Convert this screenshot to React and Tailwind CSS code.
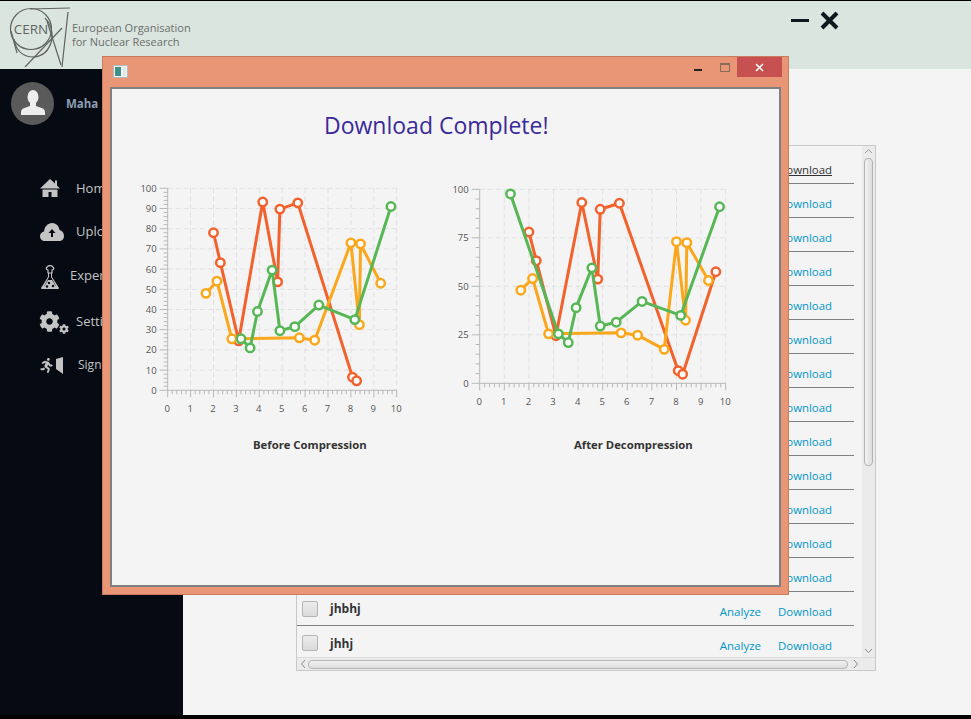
import React from "react";
import { FaCog, FaRunning } from "react-icons/fa";

const red = [[2, 78], [2.3, 63.2], [3.1, 24.5], [4.15, 93.2], [4.8, 53.7], [4.9, 89.7], [5.68, 92.8], [8.07, 6.5], [8.25, 4.7]];
const orange = [[1.67, 48], [2.15, 54], [2.8, 25.5], [5.75, 26], [6.42, 24.8], [8, 73], [8.37, 32.5], [8.42, 72.5], [9.3, 53]];
const green = [[3.2, 25.5], [3.6, 21], [3.92, 39], [4.56, 59.5], [4.9, 29.5], [5.55, 31.5], [6.6, 42.2], [8.17, 35], [9.75, 91]];

const beforeSeries = [
  { color: "#f3622d", points: red },
  { color: "#fba71b", points: orange },
  { color: "#57b757", points: green },
];

const afterSeries = [
  { color: "#f3622d", points: [...red, [9.6, 57.5]] },
  { color: "#fba71b", points: [...orange.slice(0, 5), [7.5, 17.5], ...orange.slice(5)] },
  { color: "#57b757", points: [[1.25, 97.6], ...green] },
];

const rows = Array.from({ length: 15 }, (_, i) => (i === 14 ? "jhhj" : "jhbhj"));

const range = (n) => Array.from({ length: n }, (_, i) => i);

// axis and plot, same as the JavaFX line chart on the source window
const Chart = ({ x0, x1, y0, y1, yStep, yMinor, series, width }) => {
  const px = (v) => x0 + ((x1 - x0) * v) / 10;
  const py = (v) => y0 - ((y0 - y1) * v) / 100;
  const yMajors = range(100 / yStep + 1).map((i) => i * yStep);
  const yMinors = range(100 / yMinor + 1).map((i) => i * yMinor);

  return (
    <svg width={width} height={240} className="block shrink-0" style={{ fontFamily: "'Open Sans', sans-serif" }}>
      {yMajors.filter((v) => v > 0).map((v) => (
        <line key={v} x1={x0} x2={x1} y1={py(v)} y2={py(v)} stroke="#e0e0e0" strokeDasharray="5 3" />
      ))}
      {range(10).map((i) => (
        <line key={i} x1={px(i + 1)} x2={px(i + 1)} y1={y1} y2={y0} stroke="#e0e0e0" strokeDasharray="5 3" />
      ))}
      <line x1={x0} x2={x0} y1={y1} y2={y0} stroke="#b8b8b8" />
      <line x1={x0} x2={x1} y1={y0} y2={y0} stroke="#b8b8b8" />
      {yMinors.map((v) => (
        <line key={v} x1={x0 - (v % yStep === 0 ? 8 : 4)} x2={x0} y1={py(v)} y2={py(v)} stroke="#b8b8b8" />
      ))}
      {range(51).map((i) => (
        <line key={i} x1={px(i / 5)} x2={px(i / 5)} y1={y0} y2={y0 + (i % 5 === 0 ? 7 : 4)} stroke="#b8b8b8" />
      ))}
      {yMajors.map((v) => (
        <text key={v} x={x0 - 11} y={py(v) + 3.5} textAnchor="end" fontSize="9.5" fill="#555555">
          {v}
        </text>
      ))}
      {range(11).map((i) => (
        <text key={i} x={px(i) - 0.5} y={y0 + 21.5} textAnchor="middle" fontSize="9.5" fill="#555555">
          {i}
        </text>
      ))}
      {series.map((s) => (
        <g key={s.color}>
          <polyline
            points={s.points.map(([x, y]) => `${px(x)},${py(y)}`).join(" ")}
            fill="none"
            stroke={s.color}
            strokeWidth="3"
            strokeLinejoin="round"
          />
          {s.points.map(([x, y], i) => (
            <circle key={i} cx={px(x)} cy={py(y)} r="4.2" fill="#ffffff" stroke={s.color} strokeWidth="2.5" />
          ))}
        </g>
      ))}
    </svg>
  );
};

const CernLogo = () => (
  <svg width="66" height="66" viewBox="0 0 66 66" fill="none" stroke="#5f6361" strokeWidth="1.2" className="shrink-0">
    <circle cx="26" cy="28" r="20.5" />
    <path d="M9 38 Q12 55 27 56 Q43 56 47 38 Q48 25 40 17" />
    <path d="M25 8 L65 7" />
    <path d="M63 11 L57 66" />
    <path d="M20 66 L57 27" />
    <path d="M42 20 Q49 42 56 64" />
    <path d="M6 30 L12 52" />
    <text x="26" y="33" textAnchor="middle" fontSize="13.5" fill="#5f6361" stroke="none" style={{ fontFamily: "'Open Sans', sans-serif" }}>
      CERN
    </text>
  </svg>
);

const HomeIcon = () => (
  <svg width="20" height="18" viewBox="0 0 20 18" fill="#c4c4c4">
    <path d="M10 0 L15 4.5 V1.500 H17 V6.500 L20 9.500 H0 Z" />
    <path d="M2.5 10.500 H17.5 V18 H11.500 V13 H8.500 V18 H2.5 Z" />
  </svg>
);

const CloudIcon = () => (
  <svg width="24" height="18" viewBox="0 0 24 18">
    <path
      d="M5 18 C2 18 0 16 0 13 C0 10.500 2 9 4 8.500 C4.500 3.500 8 0 12 0 C16 0 19 3 19.500 7 C22 7.500 24 10 24 13 C24 16 22 18 19 18 Z"
      fill="#c4c4c4"
    />
    <path d="M12 6 L15.500 10 H13 V14 H11 V10 H8.500 Z" fill="#060b13" />
  </svg>
);

const FlaskIcon = () => (
  <svg width="18" height="24" viewBox="0 0 18 24" fill="#c4c4c4">
    <path d="M6 2 Q9 -1 12 2 Q14 4 11 5 V8 H7 V5 Q4 4 6 2 Z" fill="none" stroke="#c4c4c4" strokeWidth="1.200" />
    <path d="M7 8 H8 V12 L3 21 H15 L10 12 V8 H11 V12 L18 23 Q18 24 17 24 H1 Q0 24 0 23 L7 12 Z" />
    <path d="M7 15 H11 L16 23 H2 Z" />
    <circle cx="8" cy="18" r="1.200" fill="#060b13" />
    <circle cx="12" cy="21" r="1.200" fill="#060b13" />
    <circle cx="6" cy="21.500" r="1.200" fill="#060b13" />
  </svg>
);

const GearsIcon = () => (
  <div className="flex items-end text-[#c4c4c4]">
    <FaCog size={21} />
    <FaCog size={10} className="-ml-px -mb-[2px]" />
  </div>
);

const ExitIcon = () => (
  <div className="flex items-center gap-[2px] text-[#c4c4c4]">
    <FaRunning size={15} />
    <svg width="7" height="17" viewBox="0 0 7 17" fill="#c4c4c4">
      <path d="M0 2 L7 0 V17 L0 12 Z" />
    </svg>
  </div>
);

const navItems = [
  { label: "Home", icon: <HomeIcon />, rowClass: "h-[44px]", iconClass: "w-[21px] ml-[39px]", textClass: "ml-[16px] mt-[2px] text-[13px]" },
  { label: "Upload", icon: <CloudIcon />, rowClass: "h-[44px]", iconClass: "w-[25px] ml-[39px]", textClass: "ml-[12px] text-[13px]" },
  { label: "Experiments", icon: <FlaskIcon />, rowClass: "h-[45px]", iconClass: "w-[18px] ml-[41px]", textClass: "ml-[11px] text-[13px] -mt-[2px]" },
  { label: "Settings", icon: <GearsIcon />, rowClass: "h-[44px]", iconClass: "w-[30px] ml-[39px]", textClass: "ml-[7px] mt-[1px] text-[13px]" },
  { label: "Sign Out", icon: <ExitIcon />, rowClass: "h-[44px]", iconClass: "w-[24px] ml-[39px]", textClass: "ml-[15px] text-[12px]" },
];

const App = () => {
  return (
    <div className="relative h-[719px] w-[971px] overflow-hidden bg-black" style={{ fontFamily: "'Open Sans', sans-serif" }}>
      {/* top bar */}
      <header className="mt-px flex h-[68px] items-start bg-[#dbe5df] pl-[5px]">
        <CernLogo />
        <div className="ml-px mt-[20px] text-[11px] leading-[14px] text-[#6a6e6c]">
          <div>European Organisation</div>
          <div>for Nuclear Research</div>
        </div>
        <div className="ml-auto mr-[132px] mt-[10px] flex items-center gap-[11px]">
          <div className="h-[3px] w-[18px] bg-[#0c1a1f]" />
          <svg width="19" height="19" viewBox="0 0 19 19" stroke="#0c1a1f" strokeWidth="4">
            <path d="M2 2 L17 17 M17 2 L2 17" />
          </svg>
        </div>
      </header>

      <div className="flex h-[646px]">
        {/* sidebar */}
        <aside className="w-[183px] shrink-0 bg-[#060b13]">
          <div className="ml-[11px] mt-[13px] flex items-center">
            <div className="flex h-[43px] w-[43px] items-end justify-center rounded-full bg-[#5a5a5a] pb-[10px]">
              <svg width="24" height="25" viewBox="0 0 24 25" fill="#eeeeee">
                <ellipse cx="12" cy="7" rx="5.500" ry="7" />
                <path d="M9 12 H15 V16 L22 18.500 Q24 19.500 24 22 V25 H0 V22 Q0 19.500 2 18.500 L9 16 Z" />
              </svg>
            </div>
            <span className="ml-[12px] mt-[1px] text-[11.500px] font-bold text-[#8d9db2]">Maha</span>
          </div>
          <nav className="mt-[41px]">
            {navItems.map((item) => (
              <div key={item.label} className={`flex items-center text-[#c4c4c4] ${item.rowClass}`}>
                <div className={`flex shrink-0 justify-center ${item.iconClass}`}>{item.icon}</div>
                <span className={item.textClass}>{item.label}</span>
              </div>
            ))}
          </nav>
        </aside>

        {/* file list */}
        <main className="flex-1 bg-[#f4f4f4] pl-[113px] pt-[76px]">
          <div className="flex h-[526px] w-[580px] flex-col border border-[#c8c8c8]">
            <div className="flex min-h-0 flex-1">
              <div className="h-full w-[565px] overflow-hidden pt-[4px]">
                {rows.map((name, i) => (
                  <div key={i} className="flex h-[34px] w-[557px] shrink-0 items-center border-b border-[#808080] pl-[5px] last:border-b-0">
                    <div className="h-[16px] w-[16px] rounded-[2px] border border-[#b4b4b4] bg-gradient-to-b from-[#ececec] to-[#dadada]" />
                    <span className="ml-[12px] mt-[1px] text-[12px] font-bold text-[#333333]">{name}</span>
                    <span className="ml-auto mt-[6px] text-[11.500px] text-[#0096c9]">Analyze</span>
                    <span
                      className={
                        i === 0
                          ? "ml-[17px] mr-[22px] mt-[6px] text-[11.400px] text-[#333333] underline"
                          : "ml-[17px] mr-[22px] mt-[6px] text-[11.400px] text-[#0096c9]"
                      }
                    >
                      Download
                    </span>
                  </div>
                ))}
              </div>
              {/* vertical scrollbar */}
              <div className="flex w-[13px] flex-col items-center bg-[#ebebeb]">
                <svg width="9" height="12" viewBox="0 0 9 12" fill="none" stroke="#9a9a9a" className="shrink-0">
                  <path d="M1 7 L4.500 3.500 L8 7" />
                </svg>
                <div className="h-[308px] w-[9px] rounded-[4px] border border-[#b4b4b4] bg-gradient-to-r from-[#f2f2f2] to-[#dddddd]" />
                <svg width="9" height="10" viewBox="0 0 9 10" fill="none" stroke="#8a8a8a" className="mt-auto mb-[1px] shrink-0">
                  <path d="M1 3 L4.500 6.500 L8 3" />
                </svg>
              </div>
            </div>
            {/* horizontal scrollbar */}
            <div className="flex h-[13px] shrink-0 items-center border-t border-[#dcdcdc] bg-[#ebebeb] pl-[2px]">
              <svg width="9" height="10" viewBox="0 0 9 10" fill="none" stroke="#8a8a8a" className="shrink-0">
                <path d="M6 1 L2.500 5 L6 9" />
              </svg>
              <div className="h-[9px] w-[540px] rounded-[4px] border border-[#b4b4b4] bg-gradient-to-b from-[#f2f2f2] to-[#dddddd]" />
              <svg width="9" height="10" viewBox="0 0 9 10" fill="none" stroke="#8a8a8a" className="ml-[3px] shrink-0">
                <path d="M3 1 L6.500 5 L3 9" />
              </svg>
            </div>
          </div>
        </main>
      </div>

      {/* floating result window */}
      <div className="absolute left-[102px] top-[56px] h-[539px] w-[687px] border border-[#c97c60] bg-[#e99677]">
        <div className="flex h-[30px] items-start">
          <svg width="15" height="13" viewBox="0 0 15 13" className="ml-[10px] mt-[8px]">
            <rect x="0.500" y="0.500" width="14" height="12" fill="#f2f2f2" stroke="#b8b8b8" />
            <rect x="2" y="2" width="6" height="9" fill="#3f8f8a" />
            <rect x="10" y="2" width="3" height="9" fill="#dfe8e6" />
          </svg>
          <div className="ml-auto mt-[12px] h-[2px] w-[8px] bg-[#222222]" />
          <div className="ml-[18px] mt-[6px] h-[9px] w-[10px] border border-[#8a6a5a] border-t-2" />
          <div className="ml-[7px] mr-[6px] flex h-[20px] w-[45px] items-center justify-center bg-[#c75050]">
            <svg width="9" height="9" viewBox="0 0 9 9" stroke="#ffffff" strokeWidth="1.600">
              <path d="M1 1 L8 8 M8 1 L1 8" />
            </svg>
          </div>
        </div>
        <div className="mx-[7px] h-[500px] w-[671px] border-2 border-[#808080] bg-[#f4f4f4]">
          <h1 className="ml-[212px] mt-[18px] text-[23px] leading-[36px] text-[#3b2a9a]">Download Complete!</h1>
          <div className="ml-[18px] mt-[32px] flex gap-[25px]">
            <div>
              <Chart x0={37.7} x1={266.7} y0={215.3} y1={13.3} yStep={10} yMinor={2} series={beforeSeries} width={290} />
              <p className="ml-[123px] mt-[22px] text-[11.300px] font-bold leading-[16px] text-[#333333]">Before Compression</p>
            </div>
            <div>
              <Chart x0={34.7} x1={280.7} y0={208.3} y1={14.3} yStep={25} yMinor={5} series={afterSeries} width={290} />
              <p className="ml-[129px] mt-[22px] text-[11.300px] font-bold leading-[16px] text-[#333333]">After Decompression</p>
            </div>
          </div>
        </div>
      </div>
    </div>
  );
};

export default App;
